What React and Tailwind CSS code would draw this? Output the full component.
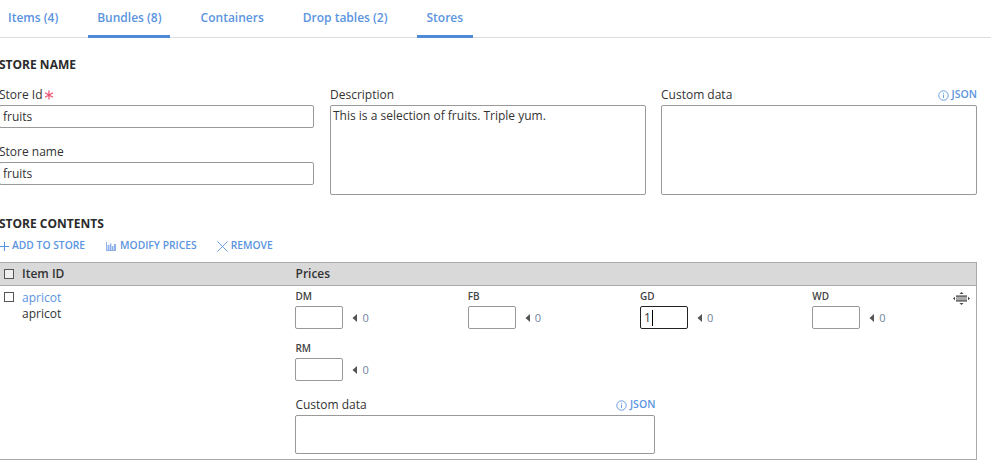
import React from "react";

const Info = () => (
  <svg width="11" height="11" viewBox="0 0 11 11" fill="none" stroke="#5b94e0" strokeWidth="0.9">
    <circle cx="5.5" cy="5.5" r="4.7" />
    <path d="M5.5 4.6V8M5.5 2.8v1" />
  </svg>
);

const JsonLink = () => (
  <span className="flex items-center gap-[2.5px] text-[10.5px] font-semibold text-[#5b94e0]">
    <Info />
    JSON
  </span>
);

const Field = ({ label, value }) => (
  <div>
    <div className="h-[20px] text-[12px] leading-[20px] text-[#333]">{label}</div>
    <input
      readOnly
      value={value}
      className="block h-[23px] w-full rounded-[2px] border border-[#999] bg-white px-[3px] text-[12px] text-[#333] outline-none"
    />
  </div>
);

const Price = ({ code, value, active, low }) => (
  <div className="w-[172.3px]">
    <div
      className={`h-[16px] text-[10px] font-semibold text-[#444] ${low ? "leading-[13px]" : "leading-[12px]"}`}
    >
      {code}
    </div>
    <div className="flex h-[23px] items-center">
      <div
        className={`flex h-[23px] w-[48px] items-center rounded-[2px] border bg-white px-[3px] text-[12px] text-[#333] ${
          active ? "border-[#222]" : "border-[#999]"
        }`}
      >
        {value}
        {active && <span className="ml-[1px] h-[16px] w-px bg-black" />}
      </div>
      <svg className="mt-[1px] ml-[9px]" width="5" height="8" viewBox="0 0 5 8">
        <path d="M5 0L0.5 4L5 8Z" fill="#555" />
      </svg>
      <span className="mt-[1px] ml-[5px] text-[11px] text-[#6f8499]">0</span>
    </div>
  </div>
);

export default function App() {
  return (
    <div
      className="h-[468px] w-[991px] overflow-hidden bg-white text-[#333]"
      style={{ fontFamily: '"Open Sans", sans-serif' }}
    >
      <div className="flex h-[38px] border-b border-[#ddd] text-[12px] font-semibold text-[#5b94e0]">
        <div className="-ml-px flex h-[38px] items-center px-[9px] pb-[3px]">Items (4)</div>
        <div className="ml-[21px] flex h-[38px] w-[82px] items-center border-b-[3px] border-[#4f8ad8] pl-[9px]">Bundles (8)</div>
        <div className="ml-[21.4px] flex h-[38px] items-center px-[9px] pb-[3px]">Containers</div>
        <div className="ml-[21px] flex h-[38px] items-center px-[9px] pb-[3px]">Drop tables (2)</div>
        <div className="ml-[20.4px] flex h-[38px] items-center border-b-[3px] border-[#4f8ad8] px-[9.6px]">Stores</div>
      </div>

      <div className="mt-[18px] -ml-px h-[17px] text-[12px] leading-[17px] font-bold text-[#2b2b2b]">STORE NAME</div>

      <div className="mt-[12px] flex pr-[14px]">
        <div className="-ml-px flex w-[315px] shrink-0 flex-col gap-[14px]">
          <div>
            <div className="flex h-[20px] items-center text-[12px] text-[#333]">
              Store Id
              <svg className="ml-[1px]" width="10" height="10" viewBox="0 0 10 10" stroke="#f0506e" strokeWidth="1.2">
                <path d="M5 0.5V9.5M1 2.8L9 7.2M9 2.8L1 7.2" />
              </svg>
            </div>
            <input
              readOnly
              value="fruits"
              className="block h-[23px] w-full rounded-[2px] border border-[#999] bg-white px-[3px] text-[12px] text-[#333] outline-none"
            />
          </div>
          <Field label="Store name" value="fruits" />
        </div>
        <div className="ml-[16px] w-[316px] shrink-0">
          <div className="h-[20px] text-[12px] leading-[20px]">Description</div>
          <div className="h-[90px] rounded-[2px] border border-[#999] px-[2px] text-[12px] leading-[20px]">
            This is a selection of fruits. Triple yum.
          </div>
        </div>
        <div className="ml-[15px] flex-1">
          <div className="flex h-[20px] items-center justify-between text-[12px]">
            Custom data
            <JsonLink />
          </div>
          <div className="h-[90px] rounded-[2px] border border-[#999]" />
        </div>
      </div>

      <div className="mt-[20px] -ml-px h-[17px] text-[12px] leading-[17px] font-bold text-[#2b2b2b]">STORE CONTENTS</div>

      <div className="mt-[4px] flex h-[20px] items-center text-[10.3px] font-semibold text-[#5b94e0]">
        <span className="flex items-center gap-[3px]">
          <svg width="9" height="9" viewBox="0 0 9 9" stroke="#5b94e0" strokeWidth="1">
            <path d="M4.5 0V9M0 4.5H9" />
          </svg>
          ADD TO STORE
        </span>
        <span className="ml-[21px] flex items-center gap-[4px]">
          <svg width="10" height="9" viewBox="0 0 10 9" fill="#8fb0e8">
            <path d="M0 0h1v8h9v1H0Z M1.6 3h1.8v5H1.6Z M3.9 1.5h1.5V8H3.9Z M5.9 4h1.6v4H5.9Z M8 2h2v6H8Z" />
          </svg>
          MODIFY PRICES
        </span>
        <span className="ml-[20px] flex items-center gap-[3px]">
          <svg width="11" height="11" viewBox="0 0 11 11" stroke="#5b94e0" strokeWidth="0.9">
            <path d="M0.5 0.5L10.5 10.5M10.5 0.5L0.5 10.5" />
          </svg>
          REMOVE
        </span>
      </div>

      <div className="mt-[6px] mr-[14px] border-r border-b border-[#aaa]">
        <div className="flex h-[24px] items-center border-y border-[#aaa] bg-[#d9d9d9] text-[12px] font-semibold text-[#333]">
          <span className="ml-[4px] h-[10px] w-[10px] border border-[#555] bg-[#eee]" />
          <span className="ml-[8px] w-[273.5px] font-semibold">Item ID</span>
          <span>Prices</span>
        </div>
        <div className="relative flex h-[173px]">
          <span className="mt-[6px] ml-[4px] h-[10px] w-[10px] border border-[#555] bg-white" />
          <div className="ml-[8px] w-[273.4px] pt-[4px] text-[12px] leading-[16px]">
            <div className="text-[#5b94e0]">apricot</div>
            <div>apricot</div>
          </div>
          <div className="w-[360px] pt-[4px]">
            <div className="flex w-[690px]">
              <Price code="DM" />
              <Price code="FB" />
              <Price code="GD" value="1" active />
              <Price code="WD" />
            </div>
            <div className="mt-[13px]">
              <Price code="RM" low />
            </div>
            <div className="mt-[14px] flex h-[20px] items-center justify-between text-[12px]">
              Custom data
              <JsonLink />
            </div>
            <div className="h-[39px] rounded-[2px] border border-[#999]" />
          </div>
          <svg className="absolute top-[6px] right-[6px]" width="17" height="13" viewBox="0 0 17 13">
            <path d="M8.5 0L10.5 2H6.5Z M8.5 13L6.5 11H10.5Z M0 6.5L2 4.8V8.2Z M17 6.5L15 4.8V8.2Z" fill="#444" />
            <rect x="3" y="4" width="11" height="5" fill="#aaa" />
            <path d="M3 3.5H14V4.5H3Z M3 8.5H14V9.5H3Z" fill="#333" />
          </svg>
        </div>
      </div>
    </div>
  );
}
